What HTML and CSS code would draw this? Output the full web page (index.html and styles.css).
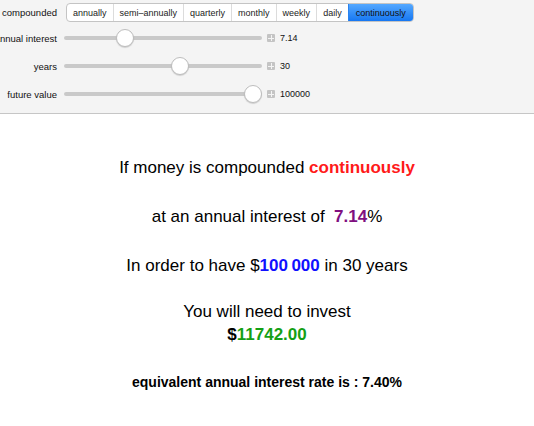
FILE: index.html
```html
<!DOCTYPE html>
<html>
  <head>
    <title>Compound Interest</title>
    <link rel="stylesheet" href="styles.css">
  </head>
  <body>
    <div class="controls">
      <div class="row">
        <span class="label">compounded</span>
        <div class="setter">
          <span class="opt">annually</span>
          <span class="opt">semi–annually</span>
          <span class="opt">quarterly</span>
          <span class="opt">monthly</span>
          <span class="opt">weekly</span>
          <span class="opt">daily</span>
          <span class="opt selected">continuously</span>
        </div>
      </div>
      <div class="row">
        <span class="label">annual interest</span>
        <div class="slider">
          <div class="track"></div>
          <div class="thumb" style="left: 61px"></div>
        </div>
        <span class="plus"></span>
        <span class="value">7.14</span>
      </div>
      <div class="row">
        <span class="label">years</span>
        <div class="slider">
          <div class="track"></div>
          <div class="thumb" style="left: 116px"></div>
        </div>
        <span class="plus"></span>
        <span class="value">30</span>
      </div>
      <div class="row">
        <span class="label">future value</span>
        <div class="slider">
          <div class="track"></div>
          <div class="thumb" style="left: 189px"></div>
        </div>
        <span class="plus"></span>
        <span class="value">100000</span>
      </div>
    </div>

    <div class="output">
      <p>If money is compounded <b class="red">continuously</b></p>
      <p>at an annual interest of &nbsp;<b class="purple">7.14</b>%</p>
      <p>In order to have $<b class="blue">100&#8201;000</b> in 30 years</p>
      <p class="invest">You will need to invest<br><b>$<span class="green">11742.00</span></b></p>
      <p class="equiv">equivalent annual interest rate is : 7.40%</p>
    </div>
  </body>
</html>
```

FILE: styles.css
```css
body {
  margin: 0;
  background-color: #fff;
  font-family: "Liberation Sans", Arial, sans-serif;
  color: #000;
}

.controls {
  background-color: #f4f4f4;
  border-bottom: 1px solid #c6c6c6;
  height: 114px;
  padding-top: 3px;
  box-sizing: border-box;
  font-size: 9px;
}

.row {
  display: flex;
  align-items: center;
  height: 28px;
}

.row:first-child {
  height: 19px;
  margin-bottom: 2px;
}

.label {
  width: 57px;
  flex-shrink: 0;
  display: flex;
  justify-content: flex-end;
  white-space: nowrap;
  margin-right: 7px;
  font-size: 9.5px;
  color: #111;
}

.setter {
  display: flex;
  height: 19px;
  margin-left: 2px;
  border: 1px solid #c4c4c4;
  border-radius: 4px;
  background-color: #fff;
  box-sizing: border-box;
  overflow: hidden;
}

.opt {
  display: flex;
  align-items: center;
  padding: 0 6px;
  border-left: 1px solid #dcdcdc;
  color: #222;
}

.opt:first-child {
  border-left: none;
}

.opt.selected {
  background: linear-gradient(#54a8ff, #1677f2);
  border-left-color: #2a83f0;
  color: #111;
  padding: 0 7px;
}

.slider {
  position: relative;
  width: 198px;
  height: 20px;
}

.track {
  position: absolute;
  left: 0;
  right: 0;
  top: 8px;
  height: 4px;
  border-radius: 2px;
  background-color: #c9c9c9;
}

.thumb {
  position: absolute;
  top: 1px;
  width: 18px;
  height: 18px;
  margin-left: -9px;
  border-radius: 50%;
  background-color: #fff;
  border: 1px solid #bdbdbd;
  box-sizing: border-box;
  box-shadow: 0 1px 1px rgba(0, 0, 0, 0.15);
}

.plus {
  width: 8px;
  height: 8px;
  margin-left: 5px;
  margin-right: 5px;
  background-color: #c4c4c4;
  border-radius: 1px;
  position: relative;
}

.plus::before,
.plus::after {
  content: "";
  position: absolute;
  background-color: #f4f4f4;
}

.plus::before {
  left: 1px;
  right: 1px;
  top: 3.5px;
  height: 1px;
}

.plus::after {
  top: 1px;
  bottom: 1px;
  left: 3.5px;
  width: 1px;
}

.value {
  color: #111;
}

.output {
  text-align: center;
  font-size: 17px;
  line-height: 23px;
  padding-top: 42px;
}

.output p {
  margin: 0 0 26px;
}

.output p.invest {
  margin-top: -3px;
  margin-bottom: 27px;
}

.output p.equiv {
  font-size: 14px;
  font-weight: bold;
  line-height: 18px;
}

.red {
  color: #ff1a1a;
}

.purple {
  color: #80107f;
}

.blue {
  color: #1010ff;
}

.green {
  color: #14a014;
}
```
